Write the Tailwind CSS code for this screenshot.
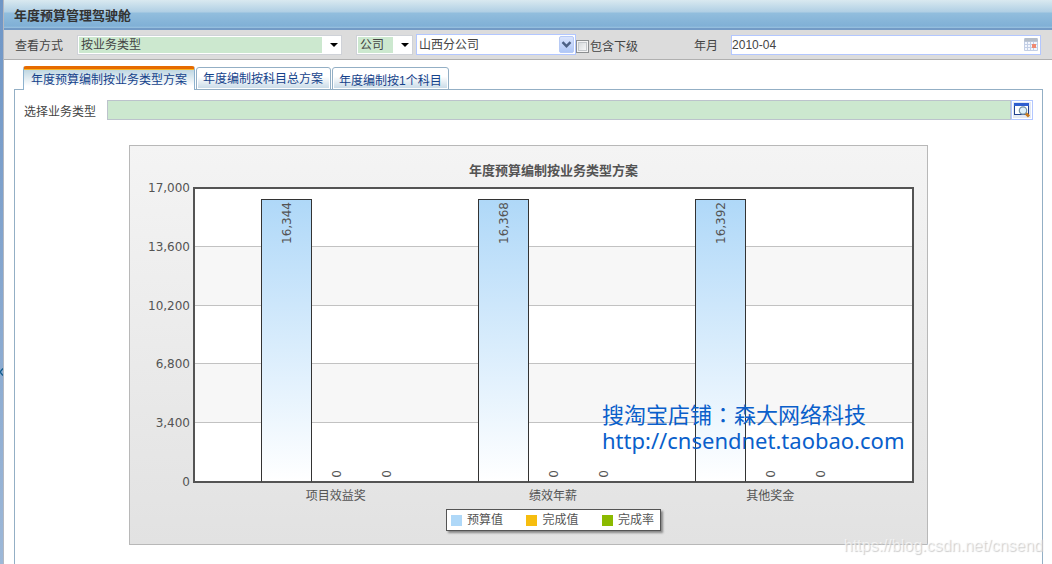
<!DOCTYPE html>
<html lang="zh-CN">
<head>
<meta charset="utf-8">
<meta name="viewport" content="width=device-width, initial-scale=1">
<title>年度预算管理驾驶舱</title>
<script src="https://cdn.jsdelivr.net/npm/@tailwindcss/browser@4"></script>
</head>
<body class="flex h-screen overflow-hidden bg-white font-['Liberation_Sans','Noto_Sans_CJK_SC',sans-serif] text-xs text-[#444]">
  <!-- Collapsed side bar -->
  <aside class="flex w-1 shrink-0 items-center border-r border-[#b4b8c0] bg-gradient-to-b from-[#6f96c6] to-[#9db8d8]">
    <button type="button" aria-label="展开侧栏" class="mt-[180px] w-[3px]">
      <svg class="h-2 w-[3px]" viewBox="0 0 3 8" fill="none" stroke="#0f5a8c" stroke-width="1.4"><path d="M3 .5 0 4l3 3.500"/></svg>
    </button>
  </aside>

  <div class="flex min-w-0 flex-1 flex-col">
    <header class="flex h-[30px] shrink-0 items-center border-b-2 border-[#739bc6] bg-[linear-gradient(to_bottom,#d9e9f0_0px,#b0cfe4_12px,#92bedd_13px,#80b0d6_26px,#9ac3e0_28px)] px-[10px] pt-1">
      <h1 class="text-[13px] leading-5 font-bold text-[#333]">年度预算管理驾驶舱</h1>
    </header>

    <form class="flex h-[30px] shrink-0 items-center border-b border-[#b0b0b0] bg-[#dcdcdc] pr-[11px] pl-[11px]">
      <label for="mode" class="mr-[14px] shrink-0 pt-0.5">查看方式</label>
      <div class="relative w-[265px] shrink-0">
        <select id="mode" class="block h-5 w-full appearance-none border-2 border-white bg-[linear-gradient(to_right,#cce8cf_calc(100%-18px),#fff_0)] pl-0.5 leading-4 outline outline-[#cfd2d8] -outline-offset-1">
          <option>按业务类型</option>
        </select>
        <svg class="pointer-events-none absolute top-2 right-1 h-1 w-2" viewBox="0 0 8 4" fill="#000"><path d="M0 0h8L4 4z"/></svg>
      </div>
      <div class="relative ml-[14px] w-[57px] shrink-0">
        <select aria-label="组织类型" class="block h-5 w-full appearance-none border-2 border-white bg-[linear-gradient(to_right,#cce8cf_calc(100%-18px),#fff_0)] pl-0.5 leading-4 outline outline-[#cfd2d8] -outline-offset-1">
          <option>公司</option>
        </select>
        <svg class="pointer-events-none absolute top-2 right-1 h-1 w-2" viewBox="0 0 8 4" fill="#000"><path d="M0 0h8L4 4z"/></svg>
      </div>
      <div class="relative ml-[3px] w-[160px] shrink-0">
        <select aria-label="公司名称" class="block h-[21px] w-full appearance-none border border-[#b3c7ff] bg-white pl-0.5 leading-4">
          <option>山西分公司</option>
        </select>
        <svg class="pointer-events-none absolute top-0.5 right-0.5 h-[17px] w-[15px]" viewBox="0 0 15 17">
          <defs><linearGradient id="drop" x2="0" y2="1"><stop stop-color="#dbe5fe"/><stop offset="1" stop-color="#aec6f6"/></linearGradient></defs>
          <rect x=".5" y=".5" width="14" height="16" rx="1.500" fill="url(#drop)" stroke="#b7caf5"/>
          <path d="M3.500 6.200 7.500 10.200l4-4" fill="none" stroke="#4d6185" stroke-width="2.400"/>
        </svg>
      </div>
      <input id="sub" type="checkbox" class="mt-1 size-[13px] shrink-0 appearance-none border border-[#8b8e90] bg-[linear-gradient(135deg,#cfd3d6,#fff)] shadow-[inset_0_0_0_1px_#f4f4f4,inset_0_0_0_2px_#c4c8cc] checked:bg-[#4d6185]">
      <label for="sub" class="shrink-0 pt-1 pl-px">包含下级</label>
      <label for="month" class="ml-14 shrink-0 pt-0.5">年月</label>
      <div class="relative ml-[13px] min-w-0 flex-1">
        <input id="month" type="text" value="2010-04" class="block h-5 w-full border border-[#b3c7ff] bg-white">
        <svg class="pointer-events-none absolute top-[3px] right-[3px] h-[13px] w-[14px]" viewBox="0 0 14 13">
          <rect width="14" height="13" rx="1" fill="#c3cfe6"/>
          <path d="M1 0h12l1 3.500H0z" fill="#b4bdc9"/>
          <path d="M1 4h2v2H1zm3 0h2v2H4zm3 0h2v2H7zm3 0h3v2h-3zM1 7h2v2H1zm3 0h2v2H4zm3 0h1v2H7zm5 0h1v2h-1zM1 10h2v2H1zm3 0h2v2H4zm3 0h2v2H7zm3 0h3v2h-3z" fill="#f3f6fd"/>
          <rect x="8" y="6" width="4" height="4" fill="#f08a72"/>
        </svg>
      </div>
    </form>

    <main class="flex min-h-0 flex-1 flex-col px-[9px] pt-1.5 pl-[10px]">
      <div role="tablist" class="z-10 -mb-px ml-[9px] flex h-6 shrink-0 items-end gap-px text-[#15428b]">
        <button type="button" role="tab" aria-selected="true" class="h-6 rounded-t-[3px] border-x border-t-[3px] border-x-[#8db2cf] border-t-[#e66b00] bg-[linear-gradient(to_bottom,#f8b429_1px,#bfd7e2_1px,#fff_17px)] px-[7px]">年度预算编制按业务类型方案</button>
        <button type="button" role="tab" aria-selected="false" class="h-[23px] rounded-t-[3px] border border-[#93afc5] bg-gradient-to-b from-white from-40% to-[#c6d9e6] pr-[7px] pl-1.5 shadow-[inset_0_0_0_1px_#fff]">年度编制按科目总方案</button>
        <button type="button" role="tab" aria-selected="false" class="h-[23px] rounded-t-[3px] border border-[#93afc5] bg-gradient-to-b from-white from-40% to-[#c6d9e6] px-1.5 pt-1 shadow-[inset_0_0_0_1px_#fff]">年度编制按1个科目</button>
      </div>

      <section class="flex min-h-0 flex-1 flex-col border-x border-t border-[#93afc5] px-[9px] pt-[10px]">
        <div class="flex h-5 shrink-0 items-center">
          <label for="biz" class="mr-[11px] shrink-0 pt-1">选择业务类型</label>
          <input id="biz" type="text" class="h-5 min-w-0 flex-1 border border-[#bcc3cc] bg-[#cce8cf]">
          <button type="button" aria-label="查询" class="flex h-5 w-[22px] shrink-0 items-center justify-center border border-[#b3c7ff] bg-white">
            <svg class="h-4 w-[18px] shrink-0" viewBox="0 0 18 16">
              <rect width="18" height="16" fill="#e4e9f3"/>
              <rect x="1.500" y="1.500" width="14" height="11" fill="#fff" stroke="#23418f"/>
              <path d="M1 1h15v3H1z" fill="#2f5fd0"/>
              <path d="m12.500 11 3.500 3.500" stroke="#c8791c" stroke-width="3"/>
              <circle cx="10" cy="8.500" r="3.700" fill="#dff1fb" stroke="#7793a5" stroke-width="1.200"/>
            </svg>
          </button>
        </div>

        <!-- Budget chart -->
        <figure class="relative mx-auto mt-[25px] flex h-[400px] w-full max-w-[799px] shrink-0 flex-col border border-[#b8b8b8] bg-gradient-to-b from-[#f4f4f4] to-[#e2e2e2] px-[13px] font-['DejaVu_Sans','Noto_Sans_CJK_SC',sans-serif] text-[#545454]">
          <figcaption class="mt-[14px] pl-[50px] text-center font-['Noto_Sans_CJK_SC',sans-serif] text-[13px] leading-5 font-bold">年度预算编制按业务类型方案</figcaption>
          <div class="mt-0.5 flex h-[306px]">
            <div class="mr-[3px] flex w-[47px] flex-col justify-between text-right leading-3">
              <span>17,000</span><span>13,600</span><span>10,200</span><span>6,800</span><span>3,400</span><span>0</span>
            </div>
            <div class="relative my-[5px] flex-1 border-2 border-[#545454] bg-white">
              <div class="grid h-full grid-rows-5">
                <div class="border-b border-[#c2c2c2]"></div>
                <div class="border-b border-[#c2c2c2] bg-[#f7f7f7]"></div>
                <div class="border-b border-[#c2c2c2]"></div>
                <div class="border-b border-[#c2c2c2] bg-[#f7f7f7]"></div>
                <div></div>
              </div>
              <div class="absolute inset-x-0 -inset-y-px flex px-[33px] text-[#545454]">
                <div class="flex flex-1 items-end justify-center">
                  <div class="flex w-[51px] items-start justify-center border border-[#333] border-b-[#545454] bg-gradient-to-b from-[#afd8f8] to-white pt-0.5" style="height:96.14%"><span class="rotate-180 leading-4 [writing-mode:vertical-rl]">16,344</span></div>
                  <div class="flex w-[50px] justify-center pb-1"><span class="rotate-180 leading-4 [writing-mode:vertical-rl]">0</span></div>
                  <div class="flex w-[50px] justify-center pb-1"><span class="rotate-180 leading-4 [writing-mode:vertical-rl]">0</span></div>
                </div>
                <div class="flex flex-1 items-end justify-center">
                  <div class="flex w-[51px] items-start justify-center border border-[#333] border-b-[#545454] bg-gradient-to-b from-[#afd8f8] to-white pt-0.5" style="height:96.28%"><span class="rotate-180 leading-4 [writing-mode:vertical-rl]">16,368</span></div>
                  <div class="flex w-[50px] justify-center pb-1"><span class="rotate-180 leading-4 [writing-mode:vertical-rl]">0</span></div>
                  <div class="flex w-[50px] justify-center pb-1"><span class="rotate-180 leading-4 [writing-mode:vertical-rl]">0</span></div>
                </div>
                <div class="flex flex-1 items-end justify-center">
                  <div class="flex w-[51px] items-start justify-center border border-[#333] border-b-[#545454] bg-gradient-to-b from-[#afd8f8] to-white pt-0.5" style="height:96.42%"><span class="rotate-180 leading-4 [writing-mode:vertical-rl]">16,392</span></div>
                  <div class="flex w-[50px] justify-center pb-1"><span class="rotate-180 leading-4 [writing-mode:vertical-rl]">0</span></div>
                  <div class="flex w-[50px] justify-center pb-1"><span class="rotate-180 leading-4 [writing-mode:vertical-rl]">0</span></div>
                </div>
              </div>
            </div>
          </div>
          <div class="flex pr-[35px] pl-[84px] text-center leading-4">
            <span class="flex-1">项目效益奖</span><span class="flex-1">绩效年薪</span><span class="flex-1">其他奖金</span>
          </div>
          <ul class="mt-[5px] ml-[303px] flex h-[22px] w-[215px] items-center justify-between border border-[#545454] bg-white pr-1.5 pl-1 shadow-[2px_2px_2px_#888]">
            <li class="flex items-center gap-[5px]"><i class="size-[11px] bg-[#afd8f8]"></i>预算值</li>
            <li class="flex items-center gap-[5px]"><i class="size-[11px] bg-[#f6bd0f]"></i>完成值</li>
            <li class="flex items-center gap-[5px]"><i class="size-[11px] bg-[#8bba00]"></i>完成率</li>
          </ul>
          <div class="absolute top-[254px] left-[472px] font-['Noto_Sans','Noto_Sans_CJK_SC',sans-serif] text-[22px] leading-[27px] whitespace-nowrap text-[#0a5fcb]">
            <p class="font-['Noto_Sans_CJK_SC',sans-serif]">搜淘宝店铺<span lang="zh-TW" class="font-['Noto_Sans_CJK_TC',sans-serif]">：</span>森大网络科技</p>
            <p>http://cnsendnet.taobao.com</p>
          </div>
        </figure>
      </section>
    </main>
  </div>
  <p class="absolute right-[9px] bottom-2 text-base leading-5 text-white/60 [text-shadow:1px_1px_1px_#ccc]">https://blog.csdn.net/cnsend</p>
</body>
</html>
